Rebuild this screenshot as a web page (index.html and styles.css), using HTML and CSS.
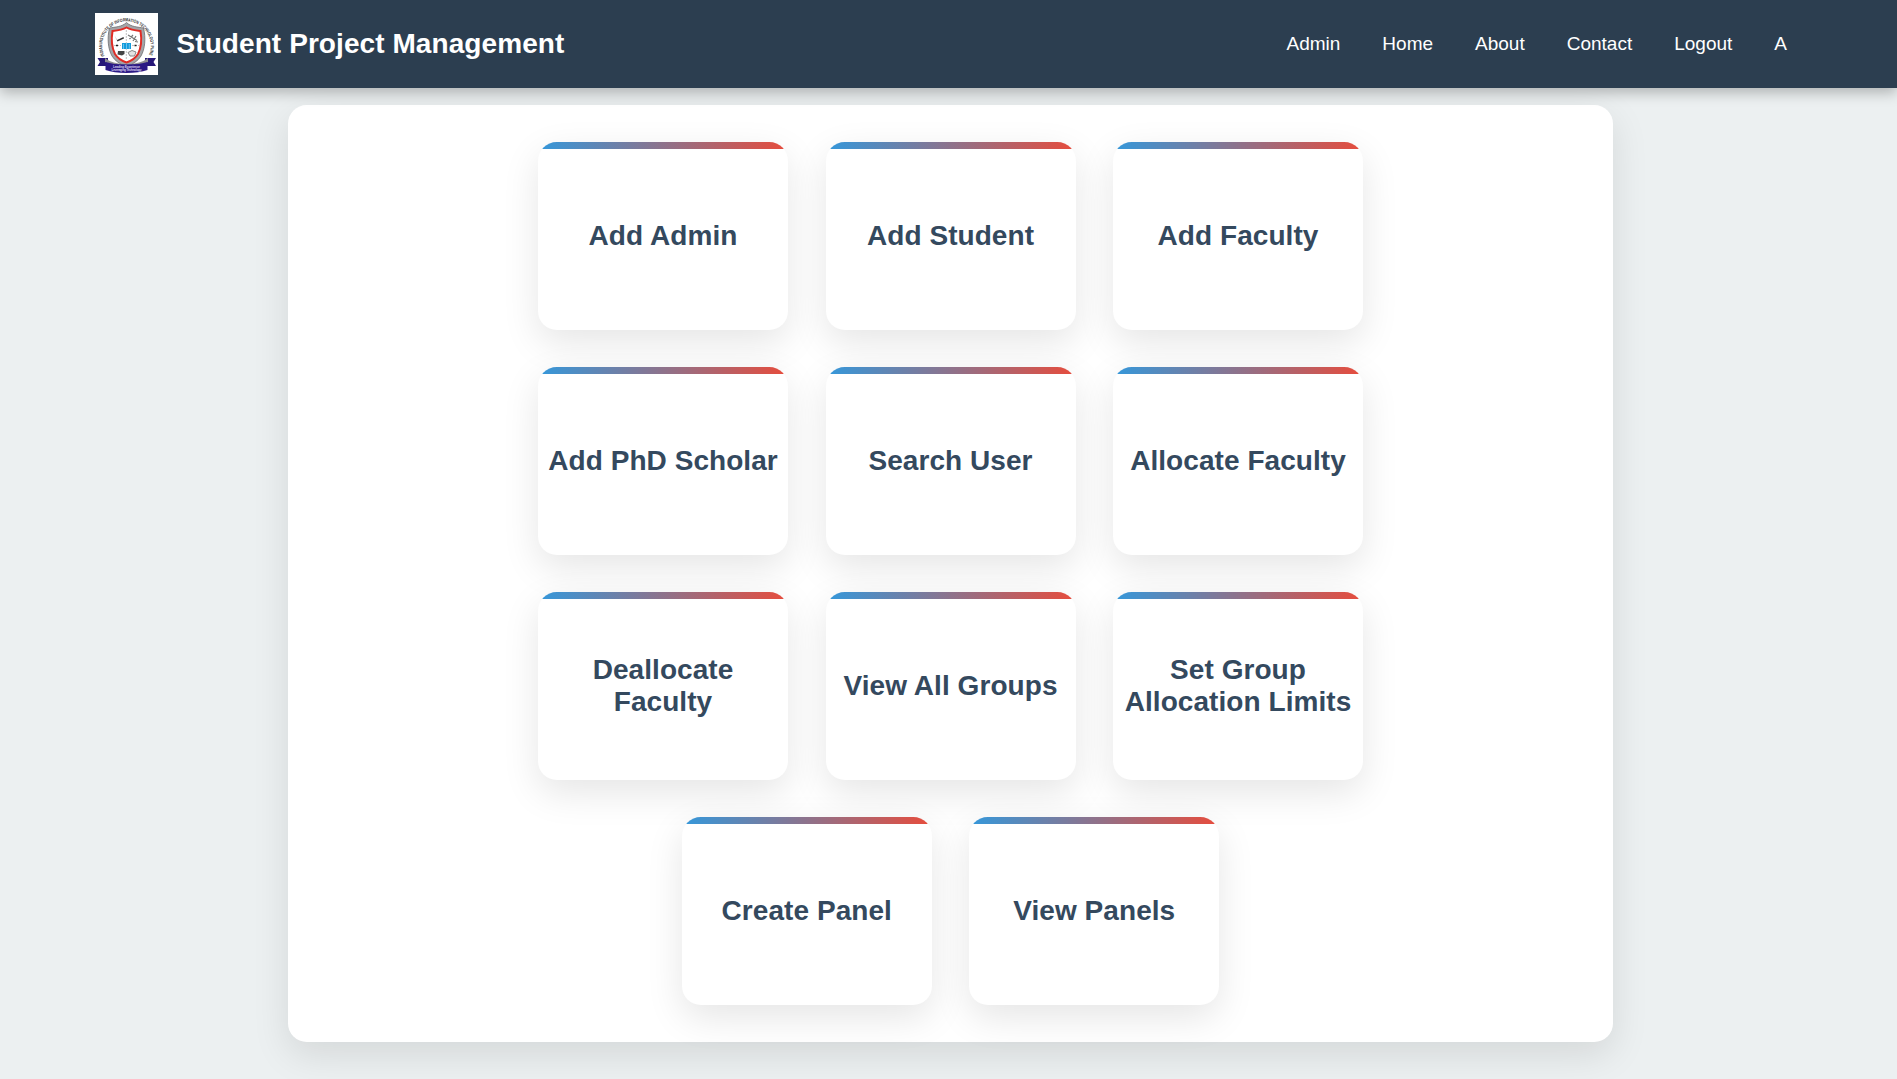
FILE: index.html
```html
<!DOCTYPE html>
<html lang="en">
<head>
<meta charset="utf-8">
<title>Student Project Management</title>
<link rel="stylesheet" href="styles.css">
</head>
<body>
<header class="navbar">
  <div class="brand">
    <svg class="logo" viewBox="0 0 63 62" aria-label="Institute logo">
      <defs>
        <path id="arc" d="M9.500 43A24.300 24.300 0 1 1 53.500 43"/>
      </defs>
      <rect width="63" height="62" fill="#fff"/>
      <text class="logo-ring"><textPath href="#arc" textLength="96" lengthAdjust="spacingAndGlyphs">INDIAN INSTITUTE OF INFORMATION TECHNOLOGY PUNE</textPath></text>
      <path d="M31.500 9.500C27 14 20 14 14.500 15C12 25 13 36 17 43C20 48 25 51 31.500 54C38 51 43 48 46 43C50 36 51 25 48.500 15C43 14 36 14 31.500 9.500Z" fill="#a4a5a8" stroke="#6d6e71" stroke-width=".8"/>
      <path d="M31.500 14.500C27 17 22 17.500 17.500 18C16 27 17 35 20 41C23 46 27 48 31.500 49.500C36 48 40 46 43 41C46 35 47 27 45.500 18C41 17.500 36 17 31.500 14.500Z" fill="#fff" stroke="#df2c25" stroke-width="2"/>
      <path d="M31.300 17V47M19 32.500H26M37 32.500H44" stroke="#999" stroke-width=".6" stroke-dasharray="2 1"/>
      <path d="M19.500 22.500L22 27L28.500 24L29 25.500L22.500 28.500Z" fill="#333"/>
      <path d="M33 22L42 27.500M34.500 26L38 22M38 28L41 23M40 28.500L43 29" stroke="#777" stroke-width="1.200"/>
      <path d="M27 30H36V36H27Z" fill="#129bdc"/>
      <path d="M28.500 31V36M31.500 30V36M34.300 31V36" stroke="#a5dcf6" stroke-width=".6"/>
      <path d="M21 32.500H23M39.500 32.500H41.500" stroke="#222" stroke-width="1.700"/>
      <path d="M23 38H29.500V41L27 42.500L22.500 41.500Z" fill="#444"/>
      <path d="M33 39.500L37 37.500L41 39L39.500 43H35Z" fill="#e4e4e4" stroke="#888" stroke-width="1"/>
      <path d="M2.500 45H13V53H2.500L5 49ZM61 45H50V53H61L58.500 49Z" fill="#261778"/>
      <path d="M10 45Q17 51 31.500 51Q46 51 53 45L53 49Q45 54 31.500 54Q18 54 10 49Z" fill="#8e8d91"/>
      <path d="M10.500 49Q18 51.500 31.500 51.500Q45 51.500 52.500 49V57Q44 60 31.500 60Q19 60 10.500 57Z" fill="#2b1985"/>
      <text class="logo-motto" x="31.500" y="54.700" textLength="27">Leading Experience</text>
      <text class="logo-motto" x="31.500" y="58.200" textLength="30">Leveraging Technology</text>
    </svg>
    <span class="brand-name">Student Project Management</span>
  </div>
  <nav class="nav-links">
    <a>Admin</a>
    <a>Home</a>
    <a>About</a>
    <a>Contact</a>
    <a>Logout</a>
    <a>A</a>
  </nav>
</header>
<main class="panel">
  <div class="card">Add Admin</div>
  <div class="card">Add Student</div>
  <div class="card">Add Faculty</div>
  <div class="card">Add PhD Scholar</div>
  <div class="card">Search User</div>
  <div class="card">Allocate Faculty</div>
  <div class="card">Deallocate Faculty</div>
  <div class="card">View All Groups</div>
  <div class="card">Set Group Allocation Limits</div>
  <div class="card">Create Panel</div>
  <div class="card">View Panels</div>
</main>
</body>
</html>
```
FILE: styles.css
```css
* {
  box-sizing: border-box;
}

body {
  margin: 0;
  height: 1079px;
  overflow: hidden;
  background: #ecf0f1;
  font-family: "Liberation Sans", Arial, sans-serif;
}

.navbar {
  position: relative;
  z-index: 1;
  display: flex;
  align-items: center;
  justify-content: space-between;
  height: 88px;
  padding: 0 110px 0 95px;
  background: #2c3e50;
  color: #fff;
  box-shadow: 0 5px 12.5px rgba(0, 0, 0, 0.25);
}

.brand {
  display: flex;
  align-items: center;
  gap: 18.5px;
}

.logo {
  display: block;
  width: 63px;
  height: 62px;
}

.logo-ring {
  font-size: 4.6px;
  font-weight: bold;
  fill: #333;
}

.logo-motto {
  font-size: 3.2px;
  font-weight: bold;
  fill: #d5d0ee;
  text-anchor: middle;
}

.brand-name {
  font-size: 28px;
  font-weight: bold;
  letter-spacing: 0.08px;
}

.nav-links {
  display: flex;
  gap: 42px;
  font-size: 19px;
}

.panel {
  display: flex;
  flex-wrap: wrap;
  justify-content: center;
  gap: 37.5px;
  width: 1325px;
  height: 937.5px;
  margin: 16.75px 0 0 288px;
  padding: 37.5px 200px;
  background: #fff;
  border-radius: 18.75px;
  box-shadow: 0 12.5px 37.5px rgba(0, 0, 0, 0.1);
}

.card {
  display: flex;
  align-items: center;
  justify-content: center;
  width: 250px;
  height: 187.5px;
  padding: 0 8px;
  border-radius: 18.75px;
  background: linear-gradient(90deg, #3498db, #e74c3c) top / 100% 7px no-repeat #fff;
  box-shadow: 0 12.5px 37.5px rgba(0, 0, 0, 0.1);
  color: #34495e;
  font-size: 28px;
  font-weight: bold;
  letter-spacing: 0.06px;
  line-height: 32px;
  text-align: center;
}
```
